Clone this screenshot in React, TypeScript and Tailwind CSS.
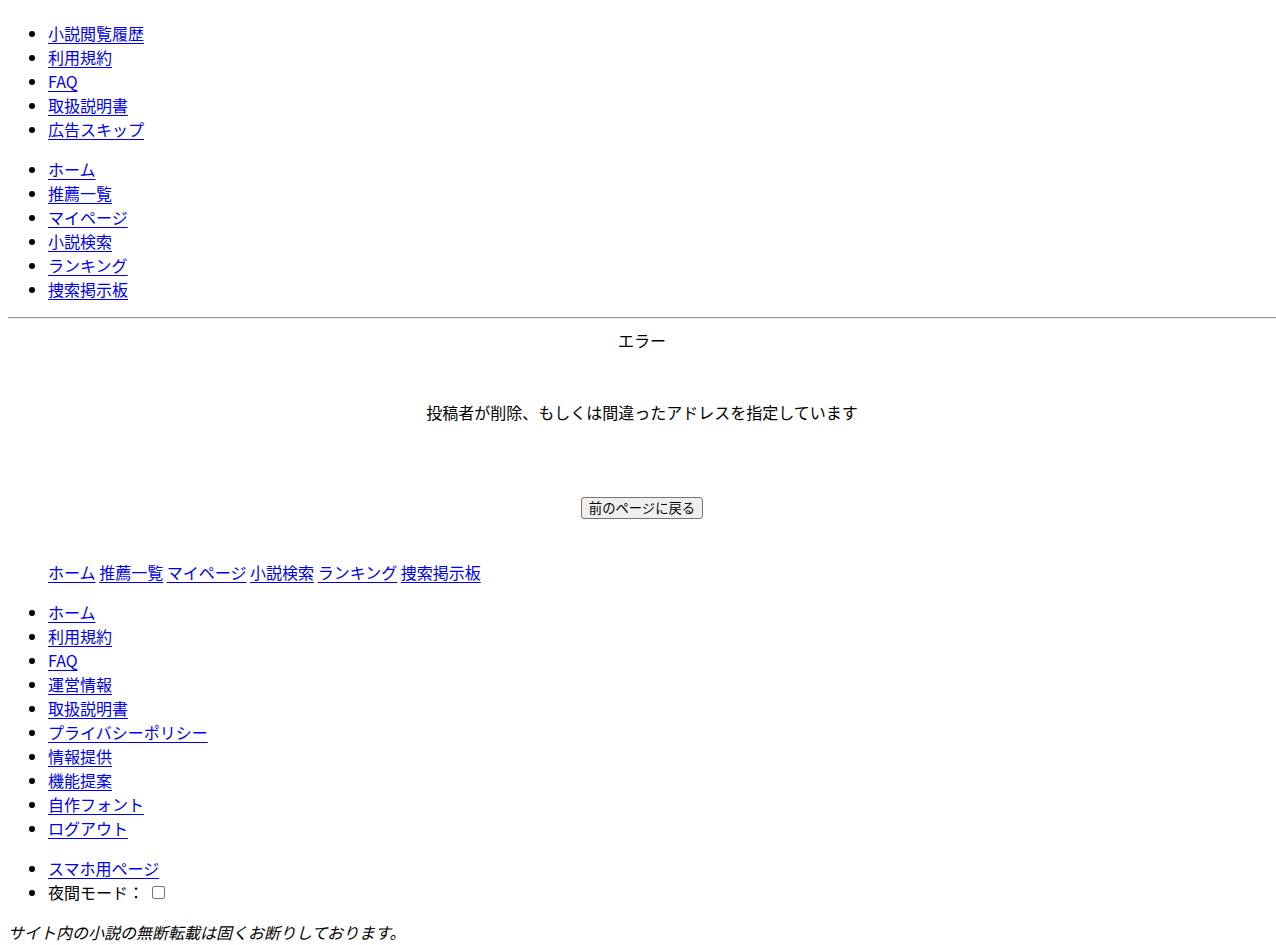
import React from "react";

const topLinks = ["小説閲覧履歴", "利用規約", "FAQ", "取扱説明書", "広告スキップ"];
const navLinks = ["ホーム", "推薦一覧", "マイページ", "小説検索", "ランキング", "捜索掲示板"];
const footerLinks = [
  "ホーム",
  "利用規約",
  "FAQ",
  "運営情報",
  "取扱説明書",
  "プライバシーポリシー",
  "情報提供",
  "機能提案",
  "自作フォント",
  "ログアウト",
];

const linkCls = "text-[#0000ee] underline underline-offset-[3px] decoration-1";

function LinkList({ items, className = "" }: { items: string[]; className?: string }) {
  return (
    <ul className={`list-disc pl-10 ${className}`}>
      {items.map((t) => (
        <li key={t}>
          <a href="#" className={linkCls}>
            {t}
          </a>
        </li>
      ))}
    </ul>
  );
}

export default function App() {
  return (
    <div
      className="bg-white text-black text-[16px] leading-6 pt-[21px] pb-2 pl-2"
      style={{ fontFamily: '"Noto Sans CJK JP", "Noto Sans", sans-serif' }}
    >
      <LinkList items={topLinks} />
      <LinkList items={navLinks} className="mt-4" />

      <hr className="mt-4 border-0 border-t border-t-[#9a9a9a] border-b border-b-[#eeeeee] h-0" />

      <div className="mt-[9px] text-center">エラー</div>

      <div className="mt-12 text-center">投稿者が削除、もしくは間違ったアドレスを指定しています</div>

      <div className="mt-[73px] flex justify-center">
        <button
          type="button"
          className="h-[22px] px-[7px] text-[13.33px] leading-[18px] bg-[#efefef] border border-[#767676] rounded-[3px] text-black"
        >
          前のページに戻る
        </button>
      </div>

      <div className="mt-[41px] pl-10">
        {navLinks.map((t, i) => (
          <React.Fragment key={t}>
            {i > 0 && " "}
            <a href="#" className={linkCls}>
              {t}
            </a>
          </React.Fragment>
        ))}
      </div>

      <LinkList items={footerLinks} className="mt-4" />

      <ul className="list-disc pl-10 mt-4">
        <li>
          <a href="#" className={linkCls}>
            スマホ用ページ
          </a>
        </li>
        <li>
          夜間モード：
          <input
            type="checkbox"
            className="inline-block ml-2 w-[13px] h-[13px] appearance-none border border-[#767676] rounded-[2px] bg-white align-baseline"
          />
        </li>
      </ul>

      <p className="mt-4 italic">サイト内の小説の無断転載は固くお断りしております。</p>
    </div>
  );
}
